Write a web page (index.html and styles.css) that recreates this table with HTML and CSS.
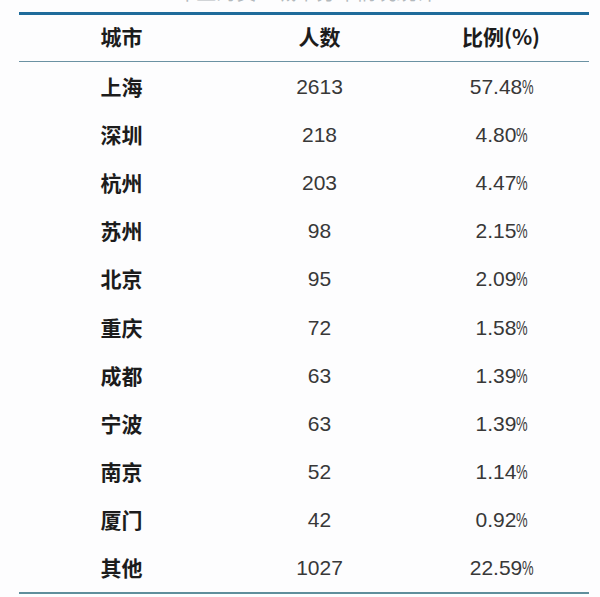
FILE: index.html
```html
<!DOCTYPE html>
<html lang="zh">
<head>
<meta charset="utf-8">
<link rel="stylesheet" href="styles.css">
</head>
<body>
<div class="page">
  <div class="caption"><span>2020年上海员工城市分布情况统计</span></div>
  <div class="table">
    <div class="row head">
      <div class="c1">城市</div><div class="c2">人数</div><div class="c3">比例(%)</div>
    </div>
    <div class="body">
      <div class="row"><div class="c1">上海</div><div class="c2 num">2613</div><div class="c3 num">57.48<span class="pct">%</span></div></div>
      <div class="row"><div class="c1">深圳</div><div class="c2 num">218</div><div class="c3 num">4.80<span class="pct">%</span></div></div>
      <div class="row"><div class="c1">杭州</div><div class="c2 num">203</div><div class="c3 num">4.47<span class="pct">%</span></div></div>
      <div class="row"><div class="c1">苏州</div><div class="c2 num">98</div><div class="c3 num">2.15<span class="pct">%</span></div></div>
      <div class="row"><div class="c1">北京</div><div class="c2 num">95</div><div class="c3 num">2.09<span class="pct">%</span></div></div>
      <div class="row"><div class="c1">重庆</div><div class="c2 num">72</div><div class="c3 num">1.58<span class="pct">%</span></div></div>
      <div class="row"><div class="c1">成都</div><div class="c2 num">63</div><div class="c3 num">1.39<span class="pct">%</span></div></div>
      <div class="row"><div class="c1">宁波</div><div class="c2 num">63</div><div class="c3 num">1.39<span class="pct">%</span></div></div>
      <div class="row"><div class="c1">南京</div><div class="c2 num">52</div><div class="c3 num">1.14<span class="pct">%</span></div></div>
      <div class="row"><div class="c1">厦门</div><div class="c2 num">42</div><div class="c3 num">0.92<span class="pct">%</span></div></div>
      <div class="row"><div class="c1">其他</div><div class="c2 num">1027</div><div class="c3 num">22.59<span class="pct">%</span></div></div>
    </div>
  </div>
</div>
</body>
</html>
```

FILE: styles.css
```css
html, body {
  margin: 0;
  padding: 0;
  background: #fdfdfe;
}
body {
  width: 600px;
  height: 597px;
  overflow: hidden;
}
.page {
  padding-left: 19px;
  width: 570px;
}
.caption {
  box-sizing: border-box;
  height: 12px;
  padding-bottom: 10px;
  overflow: hidden;
  display: flex;
  align-items: flex-end;
  justify-content: center;
  padding-right: 40px;
}
.caption span {
  font-family: "Noto Sans CJK SC", sans-serif;
  font-size: 20px;
  line-height: 20px;
  color: #b3b9bd;
  flex: none;
}
.table {
  width: 570px;
  border-top: 3px solid #1f6b9b;
  border-bottom: 2px solid #5f8f9c;
}
.row {
  display: grid;
  grid-template-columns: 205px 191px 174px;
  height: 48.2px;
  align-items: center;
  justify-items: center;
}
.head {
  box-sizing: border-box;
  height: 47px;
  padding-bottom: 3px;
  border-bottom: 1.5px solid #6b92a3;
}
.c1, .head > div {
  font-family: "Noto Sans CJK SC", sans-serif;
  font-weight: 700;
  font-size: 21px;
  color: #1c1c1c;
  line-height: 1;
}
.head .c3 {
  margin-left: -2px;
}
.num {
  font-family: "Liberation Sans", "Noto Sans CJK SC", sans-serif;
  font-size: 21px;
  color: #383838;
  line-height: 1;
}
.pct {
  display: inline-block;
  width: 12px;
  transform: scaleX(0.62);
  transform-origin: left center;
}
```
